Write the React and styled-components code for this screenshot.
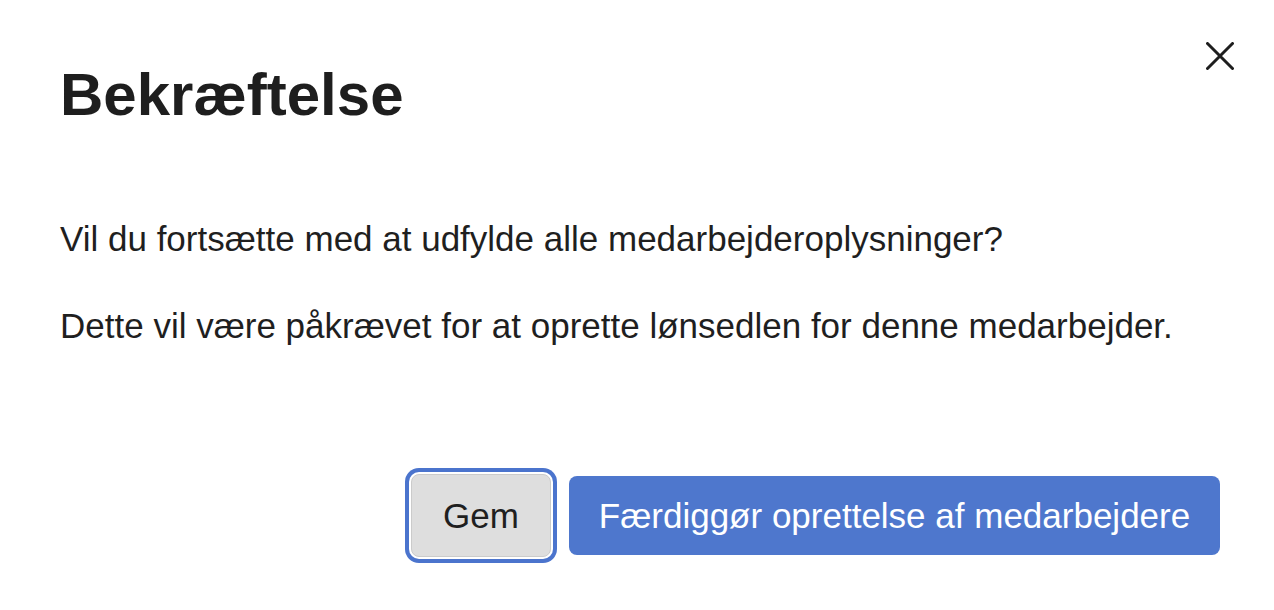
import React from 'react';
import styled, { createGlobalStyle } from 'styled-components';

const GlobalStyle = createGlobalStyle`
    html, body {
        margin: 0;
        padding: 0;
        background: #ffffff;
    }
    body {
        font-family: "Liberation Sans", Arial, Helvetica, sans-serif;
        color: #1f1f1f;
    }
`;

const Dialog = styled.div`
    box-sizing: border-box;
    width: 1274px;
    height: 610px;
    padding: 42px 54px 0 60px;
    background: #ffffff;
    display: flex;
    flex-direction: column;
`;

const Header = styled.div`
    display: flex;
    justify-content: space-between;
    align-items: flex-start;
`;

const Title = styled.h1`
    margin: 17px 0 0 0;
    font-size: 60px;
    line-height: 72px;
    font-weight: 700;
    color: #1e1e1e;
`;

const CloseButton = styled.button`
    width: 28px;
    height: 28px;
    margin-right: -14px;
    padding: 0;
    border: 0;
    background: transparent;
    cursor: pointer;
    display: flex;
    align-items: center;
    justify-content: center;
`;

const Body = styled.div`
    margin-top: 88px;
    display: flex;
    flex-direction: column;
    gap: 47px;
`;

const Text = styled.p`
    margin: 0;
    font-size: 35px;
    line-height: 40px;
    color: #1f1f1f;
`;

const Footer = styled.div`
    margin-top: 128px;
    display: flex;
    justify-content: flex-end;
    align-items: center;
    gap: 18px;
`;

const Button = styled.button`
    box-sizing: border-box;
    font-family: inherit;
    font-size: 35px;
    white-space: nowrap;
    border-radius: 8px;
    cursor: pointer;
    display: flex;
    align-items: center;
    justify-content: center;
    padding: 0;
    height: ${p => (p.$primary ? '79px' : '83px')};
    width: ${p => (p.$primary ? '651px' : '140px')};
    background: ${p => (p.$primary ? '#4e77cd' : '#dedede')};
    color: ${p => (p.$primary ? '#ffffff' : '#1f1f1f')};
    border: ${p => (p.$primary ? '0' : '1px solid #cbcbcb')};
    box-shadow: ${p => (p.$focused ? '0 0 0 2px #ffffff, 0 0 0 6px #4b74cd' : 'none')};
`;

const CloseIcon = () => (
    <svg width="28" height="28" viewBox="0 0 28 28" fill="none">
        <path d="M1.5 1.5 L26.5 26.5 M26.5 1.5 L1.5 26.5" stroke="#1e1e1e" strokeWidth="3" strokeLinecap="round" />
    </svg>
);

export default function App() {
    return (
        <>
            <GlobalStyle />
            <Dialog>
                <Header>
                    <Title>Bekræftelse</Title>
                    <CloseButton aria-label="Luk">
                        <CloseIcon />
                    </CloseButton>
                </Header>
                <Body>
                    <Text>Vil du fortsætte med at udfylde alle medarbejderoplysninger?</Text>
                    <Text>Dette vil være påkrævet for at oprette lønsedlen for denne medarbejder.</Text>
                </Body>
                <Footer>
                    <Button $focused>Gem</Button>
                    <Button $primary>Færdiggør oprettelse af medarbejdere</Button>
                </Footer>
            </Dialog>
        </>
    );
}
